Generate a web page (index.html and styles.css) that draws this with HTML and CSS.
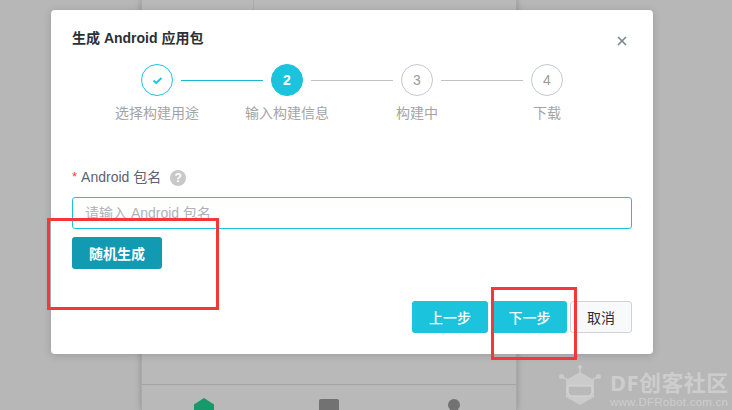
FILE: index.html
```html
<!DOCTYPE html>
<html lang="zh">
<head>
<meta charset="utf-8">
<title>生成 Android 应用包</title>
<link rel="stylesheet" href="styles.css">
</head>
<body>
<div class="backdrop">
  <div class="phone">
    <div class="phone-top"><div class="phone-col"></div></div>
    <div class="tabbar">
      <svg class="tab" width="20" height="12" viewBox="0 0 20 12"><path d="M10 0 L20 6.5 V12 H0 V6.5 Z" fill="#169a6c"/></svg>
      <span class="tab tab-square"></span>
      <span class="tab tab-circle"></span>
    </div>
  </div>
</div>

<div class="watermark">
  <svg class="wm-logo" width="42" height="41" viewBox="0 0 42 41">
    <g fill="none" stroke="#cbcbcb" stroke-width="1.6">
      <path d="M21 8V2M9 15L3 11.500M33 15L39 11.500"/>
    </g>
    <circle cx="21" cy="2" r="2" fill="#cbcbcb"/>
    <circle cx="2.500" cy="11.500" r="2.500" fill="#cbcbcb"/>
    <circle cx="39.500" cy="11.500" r="2.500" fill="#cbcbcb"/>
    <path d="M21 7 L35 15 V32 L21 40 L7 32 V15 Z" fill="#cbcbcb"/>
    <path d="M9 21 H33 V28 L30 31 H12 L9 28 Z" fill="#b9b9b9" stroke="#d8d8d8" stroke-width="1"/>
  </svg>
  <div class="wm-text">
    <div class="wm-name">DF创客社区</div>
    <div class="wm-url">www.DFRobot.com.cn</div>
  </div>
</div>

<section class="modal">
  <header class="modal-head">
    <h1 class="modal-title">生成 Android 应用包</h1>
    <svg class="close" width="10" height="10" viewBox="0 0 10 10"><path d="M1 1L9 9M9 1L1 9" stroke="#7e8790" stroke-width="1.7"/></svg>
  </header>

  <div class="steps">
    <div class="step-track">
      <span class="dot dot-done">
        <svg width="11" height="9" viewBox="0 0 11 9"><path d="M1.500 4.500L4.200 7L9.500 2" fill="none" stroke="#1cc3dd" stroke-width="1.900"/></svg>
      </span>
      <span class="line line-done"></span>
      <span class="dot dot-active">2</span>
      <span class="line"></span>
      <span class="dot">3</span>
      <span class="line"></span>
      <span class="dot">4</span>
    </div>
    <div class="step-labels">
      <span>选择构建用途</span>
      <span>输入构建信息</span>
      <span>构建中</span>
      <span>下载</span>
    </div>
  </div>

  <div class="field">
    <div class="field-label">
      <span class="req">*</span>
      <span>Android 包名</span>
      <span class="help">?</span>
    </div>
    <input class="input" type="text" placeholder="请输入 Android 包名">
    <button class="btn btn-dark" type="button">随机生成</button>
  </div>

  <footer class="modal-foot">
    <button class="btn btn-primary" type="button">上一步</button>
    <button class="btn btn-primary btn-next" type="button">下一步</button>
    <button class="btn btn-plain" type="button">取消</button>
  </footer>
</section>

<div class="mark mark-a"></div>
<div class="mark mark-b"></div>
</body>
</html>
```

FILE: styles.css
```css
* { box-sizing: border-box; }
html, body { margin: 0; height: 100%; }
body {
  width: 732px;
  height: 410px;
  overflow: hidden;
  position: relative;
  background: #b7b7b7;
  font-family: "Liberation Sans", "Noto Sans CJK SC", sans-serif;
}

.backdrop {
  display: flex;
  justify-content: center;
  height: 410px;
}
.phone {
  width: 376px;
  margin-left: -74px;
  height: 410px;
  background: #b9b9b9;
  border-left: 1px solid #a9a9a9;
  border-right: 1px solid #a9a9a9;
  box-shadow: 0 0 6px rgba(0, 0, 0, .22);
  display: flex;
  flex-direction: column;
}
.phone-top { height: 385px; border-bottom: 1px solid #a3a3a3; flex: none; }
.phone-col { width: 112px; height: 10px; border-right: 1px solid #adadad; }
.tabbar {
  flex: 1;
  display: flex;
  align-items: flex-start;
  justify-content: space-between;
  padding: 13px 56px 0 52px;
}
.tab { display: block; flex: none; }
.tab-square { width: 20px; height: 12px; margin-top: 1px; margin-left: -4px; border-radius: 2px 2px 0 0; background: #727272; }
.tab-circle { width: 12px; height: 12px; margin-top: 1px; border-radius: 50%; background: #727272; }

.watermark {
  position: absolute;
  left: 559px;
  top: 365px;
  display: flex;
  gap: 9px;
}
.wm-logo { display: block; flex: none; }
.wm-text { color: #cdcdcd; padding-top: 6px; width: 120px; }
.wm-name { font-size: 22px; line-height: 22px; height: 22px; font-weight: 700; letter-spacing: .4px; white-space: nowrap; font-family: "Noto Sans", "Noto Sans CJK SC", sans-serif; }
.wm-url { font-size: 11.5px; line-height: 12px; margin-top: 3px; white-space: nowrap; font-family: "Liberation Sans", sans-serif; letter-spacing: .25px; }

.modal {
  position: absolute;
  left: 51px;
  top: 10px;
  width: 602px;
  height: 344px;
  background: #fff;
  border-radius: 4px;
  box-shadow: 0 1px 8px rgba(0, 0, 0, .16);
  padding: 0 21px;
}
.modal-head {
  display: flex;
  align-items: center;
  justify-content: space-between;
  height: 52px;
  padding: 4px 5px 0 0;
}
.modal-title { margin: 0; font-size: 14px; font-weight: 700; color: #2b2f36; line-height: 20px; }
.close { display: block; margin-top: 6px; }

.steps { height: 78px; }
.step-track {
  display: flex;
  align-items: center;
  justify-content: center;
  gap: 8px;
  height: 32px;
  margin-top: 2px;
}
.dot {
  width: 32px;
  height: 32px;
  border-radius: 50%;
  border: 1px solid #c4c8ce;
  color: #9a9a9a;
  font-size: 14px;
  display: flex;
  align-items: center;
  justify-content: center;
  flex: none;
}
.dot-done { border-color: #1cc3dd; }
.dot-active { background: #1cc3dd; border-color: #1cc3dd; color: #fff; font-weight: 700; }
.line { width: 82px; height: 1px; background: #c2c2c2; flex: none; }
.line-done { background: #1cb8d2; }
.step-labels {
  display: grid;
  grid-template-columns: repeat(4, 130px);
  justify-content: center;
  margin-top: 7px;
  font-size: 14px;
  line-height: 20px;
  color: #a4a4a4;
  text-align: center;
}

.field { padding-top: 24px; }
.field-label {
  display: flex;
  align-items: center;
  height: 20px;
  font-size: 14px;
  color: #5c6270;
  gap: 4px;
}
.req { color: #f0413e; font-size: 13px; }
.help {
  width: 16px;
  height: 16px;
  margin-left: 5px;
  margin-top: 3px;
  border-radius: 50%;
  background: #c9c9c9;
  color: #fff;
  font-size: 12px;
  font-weight: 700;
  display: flex;
  align-items: center;
  justify-content: center;
}
.input {
  display: block;
  width: 560px;
  height: 32px;
  margin-top: 11px;
  padding: 0 12px;
  border: 1px solid #1cc3dd;
  border-radius: 3px;
  outline: none;
  font: inherit;
  font-size: 14px;
  color: #333;
}
.input::placeholder { color: #aeb2b8; opacity: 1; }

.btn {
  height: 32px;
  border-radius: 3px;
  border: 1px solid transparent;
  padding: 0;
  font: inherit;
  font-size: 14px;
  cursor: pointer;
}
.btn-dark { display: block; width: 90px; margin-top: 8px; background: #129ab3; color: #fff; font-weight: 700; }
.btn-primary { width: 76px; background: #1cc3dd; color: #fff; font-weight: 500; }
.btn-next { width: 75px; margin-left: 4px; }
.btn-plain { width: 62px; margin-left: 3px; background: #f8f9fa; border-color: #cfd2d7; color: #2b2f36; }

.modal-foot {
  position: absolute;
  right: 21px;
  bottom: 21px;
  display: flex;
}

.mark { position: absolute; border: 3px solid #f63737; }
.mark-a { left: 47px; top: 218px; width: 172px; height: 92px; }
.mark-b { left: 491px; top: 287px; width: 86px; height: 73px; }
```
